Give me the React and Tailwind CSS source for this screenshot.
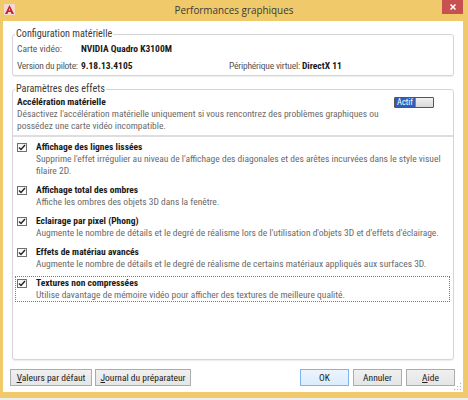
const Check = () => (
  <div className="mt-[2px] w-[10px] h-[9px] shrink-0 border border-[#707070] bg-gradient-to-b from-[#f4f4f4] to-[#ffffff] flex items-center justify-center">
    <svg width="8" height="7" viewBox="0 0 8 7">
      <polyline points="1,3.5 3,5.5 7,1" fill="none" stroke="#222" strokeWidth="1.4" />
    </svg>
  </div>
);

const Item = ({ title, lines, focus }) => (
  <div
    className={
      focus
        ? "flex pl-[1px] border border-dotted border-[#7a7a7a] ml-[2px] mr-[3px]"
        : "flex pl-[1px] border border-transparent ml-[2px] mr-[3px]"
    }
  >
    <Check />
    <div className="ml-[9px]">
      <div className="h-[12px] font-bold text-[#1a1a1a]">{title}</div>
      {lines.map((l, i) => (
        <div key={i} className="h-[12px] text-[#6a6a6a]">{l}</div>
      ))}
    </div>
  </div>
);

const Btn = ({ children, w, primary }) => (
  <div
    className={
      primary
        ? "h-[17px] flex items-center justify-center border border-[#7eb4ea] bg-gradient-to-b from-[#ecf4fc] to-[#dcecfc] text-[#222] " + w
        : "h-[17px] flex items-center justify-center border border-[#acacac] bg-gradient-to-b from-[#f0f0f0] to-[#e5e5e5] text-[#222] " + w
    }
  >
    {children}
  </div>
);

export default function App() {
  return (
    <div className="w-[468px] h-[400px] bg-[#eeeeee] font-['Roboto',sans-serif]">
      <div className="h-[398px] bg-[#f0c96a] flex flex-col">
        <div className="h-[21px] grid grid-cols-[1fr_auto_1fr] items-start">
          <div className="pl-[4px] pt-[4px]">
            <svg width="11" height="11" viewBox="0 0 11 11">
              <rect x="0" y="0" width="11" height="11" fill="#f3d9cf" rx="1" />
              <path d="M5.5 1 L10 10 H7.6 L6.8 8 H4.2 L3.4 10 H1 Z" fill="#c8202f" />
              <path d="M5.5 4.2 L6.3 6.6 H4.7 Z" fill="#f3d9cf" />
            </svg>
          </div>
          <div className="font-['Open_Sans',sans-serif] text-[9.9px] leading-[21px] text-[#3a3a3a]">Performances graphiques</div>
          <div className="flex justify-end pr-[5px]">
            <div className="w-[21px] h-[14px] bg-[#c75050] flex items-center justify-center">
              <svg width="6" height="6" viewBox="0 0 6 6">
                <path d="M0.5 0.5 L5.5 5.5 M5.5 0.5 L0.5 5.5" stroke="#fff" strokeWidth="1.5" />
              </svg>
            </div>
          </div>
        </div>

        <div className="relative ml-[3px] mr-[5px] h-[371px] bg-white flex flex-col pt-[7px] text-[9.5px] leading-[12px] whitespace-nowrap [font-stretch:75%]">
          <fieldset className="mx-[9px] border border-[#d5d5d5] rounded-[3px] pb-[3px] shadow-[0_1px_1px_rgba(0,0,0,0.08)]">
            <legend className="ml-[2px] px-[1px] text-[10.2px] text-[#3b3b3b]">Configuration matérielle</legend>
            <div className="pl-[4px] pt-[3px] flex">
              <span className="w-[64px] shrink-0 text-[#555]">Carte vidéo:</span>
              <span className="font-bold text-[#1a1a1a]">NVIDIA Quadro K3100M</span>
            </div>
            <div className="pl-[4px] mt-[5px] flex">
              <span className="w-[64px] shrink-0 tracking-[-0.25px] text-[#555]">Version du pilote:</span>
              <span className="w-[148px] shrink-0 font-bold text-[#1a1a1a]">9.18.13.4105</span>
              <span className="w-[73px] shrink-0 tracking-[-0.2px] text-[#555]">Périphérique virtuel:</span>
              <span className="font-bold text-[#1a1a1a]">DirectX 11</span>
            </div>
          </fieldset>

          <fieldset className="mx-[9px] mt-[7px] h-[277px] border border-[#d5d5d5] rounded-[3px] shadow-[0_1px_1px_rgba(0,0,0,0.08)]">
            <legend className="ml-[2px] px-[1px] text-[10.2px] text-[#3b3b3b]">Paramètres des effets</legend>
            <div className="px-[4px] pt-[1px]">
              <div className="flex justify-between items-start">
                <div className="h-[12px] font-bold text-[#1a1a1a]">Accélération matérielle</div>
                <div className="mr-[15px] mt-[1px] flex h-[11px] border border-[#555] rounded-[1px]">
                  <div className="w-[20px] bg-[#2f5fb8] text-white text-[8.5px] leading-[9px] flex items-center justify-center">Actif</div>
                  <div className="w-[18px] bg-gradient-to-b from-[#f2f2f2] to-[#d8d8d8] border-l border-[#888]"></div>
                </div>
              </div>
              <div className="h-[12px] text-[#6a6a6a]">Désactivez l'accélération matérielle uniquement si vous rencontrez des problèmes graphiques ou</div>
              <div className="h-[12px] text-[#6a6a6a]">possédez une carte vidéo incompatible.</div>
            </div>
            <div className="mt-[3px] h-[2px] bg-[#dedede]"></div>
            <div className="mt-[3px] flex flex-col gap-[5px]">
              <Item
                title="Affichage des lignes lissées"
                lines={[
                  "Supprime l'effet irrégulier au niveau de l'affichage des diagonales et des arêtes incurvées dans le style visuel",
                  "filaire 2D.",
                ]}
              />
              <Item title="Affichage total des ombres" lines={["Affiche les ombres des objets 3D dans la fenêtre."]} />
              <Item
                title="Eclairage par pixel (Phong)"
                lines={["Augmente le nombre de détails et le degré de réalisme lors de l'utilisation d'objets 3D et d'effets d'éclairage."]}
              />
              <Item
                title="Effets de matériau avancés"
                lines={["Augmente le nombre de détails et le degré de réalisme de certains matériaux appliqués aux surfaces 3D."]}
              />
              <Item
                focus
                title="Textures non compressées"
                lines={["Utilise davantage de mémoire vidéo pour afficher des textures de meilleure qualité."]}
              />
            </div>
          </fieldset>

          <div className="mt-[9px] pl-[7px] pr-[8px] flex">
            <div className="flex gap-[3px]">
              <Btn w="w-[82px]"><span><u>V</u>aleurs par défaut</span></Btn>
              <Btn w="w-[96px]"><span><u>J</u>ournal du préparateur</span></Btn>
            </div>
            <div className="ml-auto flex gap-[4px]">
              <Btn w="w-[49px]" primary>OK</Btn>
              <Btn w="w-[49px]">Annuler</Btn>
              <Btn w="w-[49px]"><span><u>A</u>ide</span></Btn>
            </div>
          </div>

          <svg className="absolute right-[1px] bottom-[1px]" width="8" height="8" viewBox="0 0 8 8">
            <g fill="#bdbdbd">
              <rect x="6" y="0" width="1.2" height="1.2" />
              <rect x="3" y="3" width="1.2" height="1.2" />
              <rect x="6" y="3" width="1.2" height="1.2" />
              <rect x="0" y="6" width="1.2" height="1.2" />
              <rect x="3" y="6" width="1.2" height="1.2" />
              <rect x="6" y="6" width="1.2" height="1.2" />
            </g>
          </svg>
        </div>
      </div>
    </div>
  );
}
